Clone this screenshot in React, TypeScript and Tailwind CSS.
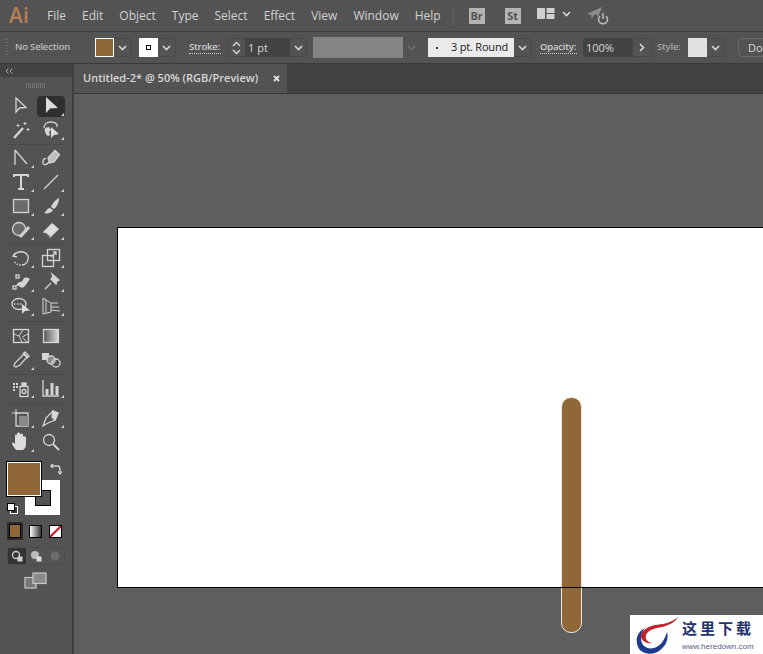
import type { ReactNode } from "react";

const menus = ["File", "Edit", "Object", "Type", "Select", "Effect", "View", "Window", "Help"];

const Chevron = ({ className = "text-[#d8d8d8]" }: { className?: string }) => (
  <svg width="9" height="6" viewBox="0 0 9 6" fill="none" stroke="currentColor" strokeWidth="1.6" className={className}>
    <path d="M1 1l3.5 3.5L8 1" />
  </svg>
);

const ChevronBox = ({ className = "w-[18px]" }: { className?: string }) => (
  <div className={`h-[19px] flex items-center justify-center rounded-r-sm border border-l-0 border-[#4a4a4a] ${className}`}>
    <Chevron />
  </div>
);

const Tool = ({ children, flag = false, active = false }: { children: ReactNode; flag?: boolean; active?: boolean }) => (
  <div className={`relative w-[28px] flex items-center justify-center rounded-sm text-[#d4d4d4] ${active ? "h-[21px] bg-[#2f2f2f]" : "h-[24px]"}`}>
    <svg width="20" height="20" viewBox="0 0 20 20" fill="none" stroke="currentColor" strokeWidth="1.3">
      {children}
    </svg>
    {flag && <div className={`absolute right-[1px] w-0 h-0 border-l-[3px] border-l-transparent border-b-[3px] border-b-[#d4d4d4] ${active ? "bottom-[1px]" : "bottom-[2px]"}`} />}
  </div>
);

const Row = ({ children }: { children: ReactNode }) => (
  <div className="h-[24px] flex items-center justify-center gap-[2px]">{children}</div>
);

const Sep = ({ h = "mt-[2px] mb-[1px]" }: { h?: string }) => <div className={`h-px mx-[8px] bg-[#494949] ${h}`} />;

const Tools = () => (
  <div className="flex flex-col">
    <Row>
      <Tool><path d="M5 2v14l3.500-4 6.500-.5z" /></Tool>
      <Tool active flag><path d="M5 1v16l4-4.500 8-.5z" fill="#dcdcdc" stroke="none" /></Tool>
    </Row>
    <Row>
      <Tool><path d="M3 18L12 8" strokeWidth="2.4" /><path d="M14 2v3M12.500 3.500h3M17 8v3M15.500 9.500h3M7 4v3M5.500 5.500h3" strokeWidth="1" /></Tool>
      <Tool flag><path d="M3 8c0-4 3-6 7-6s7 2 6 5" /><path d="M4 8c-1 3 1 7 3 8l2-1-1-3 2-2-2-3z" fill="#d4d4d4" stroke="none" /><path d="M10 7v11l3-3 5-1z" fill="#dcdcdc" stroke="none" /></Tool>
    </Row>
    <Sep />
    <Row>
      <Tool flag><path d="M4 2v15M4 2l12 14" /></Tool>
      <Tool><path d="M7 10L14 2.500 18.500 6.500 13 14 8.500 15z" fill="#bdbdbd" /><path d="M8 14C5 18 1 17 2 13c.5-2 2-3 3-2" /></Tool>
    </Row>
    <Row>
      <Tool flag><path d="M3 5V3h14v2M10 3v14M7 17h6" strokeWidth="2" /></Tool>
      <Tool flag><path d="M3 17L17 3" /></Tool>
    </Row>
    <Row>
      <Tool flag><rect x="2.500" y="3.500" width="15" height="13" fill="#6b6b6b" /></Tool>
      <Tool flag><path d="M18 2c-3 1-7 6-8 9l3 2c3-2 5-7 5-11z" fill="#d4d4d4" stroke="none" /><path d="M9 12c-3 0-3 3-6 5 3 1 8 0 9-3z" fill="#d4d4d4" stroke="none" /></Tool>
    </Row>
    <Row>
      <Tool flag><circle cx="8" cy="9" r="6.500" fill="#6b6b6b" /><path d="M9 17L18 7" strokeWidth="3" /></Tool>
      <Tool flag><path d="M2 12l9-9 7 6-9 9z" fill="#dcdcdc" stroke="none" /><path d="M4 13l5 4" stroke="#535353" /></Tool>
    </Row>
    <Sep />
    <Row>
      <Tool flag><path d="M4 5l-2 3 4 1M3 7c3-4 11-5 14 1 1 5-2 9-6 9" /><path d="M10 17c-3 0-5-1-7-4" strokeDasharray="1.500 1.500" /></Tool>
      <Tool flag><rect x="1.500" y="7.500" width="11" height="11" /><rect x="6.500" y="1.500" width="12" height="11" /><path d="M10 9l5-5M12 4h3v3" /></Tool>
    </Row>
    <Row>
      <Tool flag><path d="M6 14c2-6 4-1 6-5s3-3 6-2c-2 3-4 8-7 8s-2-4-5-1z" fill="#d4d4d4" /><rect x="2" y="14" width="3" height="3" /><rect x="5" y="3" width="3" height="3" /></Tool>
      <Tool flag><path d="M11 2l7 6-2 1-1 3-5-5 2-2zM4 17l6-6" fill="#d4d4d4" /></Tool>
    </Row>
    <Row>
      <Tool flag><ellipse cx="8" cy="8" rx="7" ry="5.500" /><path d="M3 8h9" strokeDasharray="1.500 1.500" /><path d="M11 8v10l3-3 5-.5z" fill="#dcdcdc" stroke="none" /></Tool>
      <Tool flag><path d="M2 2l8 5v9l-8 2zM10 7l7 0M10 11l8 0M10 14l9 1M5 4v13" strokeWidth="1" /></Tool>
    </Row>
    <Sep h="mt-[3px] mb-[2px]" />
    <Row>
      <Tool><rect x="2.500" y="3.500" width="15" height="13" /><path d="M3 8l5 2 3 6M8 10l4-6M11 11l6-3M12 12l4 4" strokeWidth="1" /></Tool>
      <Tool><rect x="2.500" y="3.500" width="15" height="13" fill="url(#toolGrad)" /><defs><linearGradient id="toolGrad"><stop stopColor="#555" /><stop offset="1" stopColor="#ddd" /></linearGradient></defs></Tool>
    </Row>
    <Row>
      <Tool flag><path d="M14 2l4 4-2 1-7 8-4 2-2-1 1-3 8-8z" /><path d="M12 3l5 5" strokeWidth="2" /></Tool>
      <Tool><rect x="1" y="3" width="7" height="7" fill="#d4d4d4" stroke="none" /><circle cx="10" cy="10" r="4" fill="#888" /><circle cx="15" cy="13" r="4" /></Tool>
    </Row>
    <Sep />
    <Row>
      <Tool flag><rect x="9" y="8.500" width="8" height="10" /><rect x="11" y="5" width="4" height="3" fill="#d4d4d4" /><circle cx="13" cy="13.500" r="2" /><path d="M2 6h2M5 6h2M2 9h2M5 9h2M2 12h2" strokeWidth="2" /></Tool>
      <Tool flag><path d="M2 2v16h16" /><path d="M6 17v-6M11 17V5M16 17V8" strokeWidth="3" /></Tool>
    </Row>
    <Sep h="mt-[3px] mb-[2px]" />
    <Row>
      <Tool flag><path d="M1 5h6M5 1v6" strokeWidth="1" /><path d="M5 5h12v13H5z" /><path d="M8 8h9v10H8z" fill="#888" stroke="none" /></Tool>
      <Tool flag><path d="M2 18l3-8 7-7 5 2-3 7-7 3z" /><path d="M12 3l5 2-3 7-3-3z" fill="#d4d4d4" /></Tool>
    </Row>
    <Row>
      <Tool flag><path d="M5 18c-2-3-4-5-4-7 1-1 2 0 3 1V4c0-2 2-2 2 0V2c0-2 3-2 3 0v1c0-2 3-2 3 0v2c0-1 3-1 3 1v6c0 3-1 5-3 6z" fill="#dcdcdc" stroke="none" /></Tool>
      <Tool><circle cx="8" cy="8" r="5.500" /><path d="M12 12l6 6" strokeWidth="2" /></Tool>
    </Row>
  </div>
);

const ColorBlock = () => (
  <div className="flex flex-col">
    <div className="relative h-[60px] mt-[8px]">
      {/* stroke swatch sits behind the fill swatch */}
      <div className="absolute left-[25px] top-[18px] w-[35px] h-[35px] bg-white flex items-center justify-center">
        <div className="w-[16px] h-[16px] bg-[#535353] border border-black" />
      </div>
      <div className="absolute left-[7px] top-[0px] w-[34px] h-[34px] bg-[#906739] border border-white outline outline-1 outline-black" />
      <svg className="absolute left-[50px] top-[1px] text-[#d4d4d4]" width="12" height="13" viewBox="0 0 12 13" fill="none" stroke="currentColor" strokeWidth="1.300">
        <path d="M1 3h7c2 0 2 2 2 6M0.500 3l2.500-2M0.500 3l2.500 2M10 11l-2-2.500M10 11l2-2.500" />
      </svg>
      <div className="absolute left-[7px] top-[41px] w-[8px] h-[8px] bg-white border border-black z-10" />
      <div className="absolute left-[10px] top-[44px] w-[8px] h-[8px] bg-[#333] border border-white" />
    </div>
    <div className="flex items-center pl-[7px] mb-[7px]">
      <div className="w-[16px] h-[18px] bg-[#2f2a25] p-[2px]"><div className="w-full h-full bg-[#906739] border border-black" /></div>
      <div className="ml-[6px] w-[13px] h-[13px] border border-black bg-gradient-to-r from-white to-[#3a3a3a]" />
      <div className="ml-[7px] w-[13px] h-[13px] border border-black bg-white overflow-hidden relative">
        <div className="absolute left-[-3px] top-[4px] w-[18px] h-[2px] bg-[#d0101c] -rotate-45" />
      </div>
    </div>
    <div className="mx-[7px] flex h-[18px] border border-[#4c4c4c] rounded-sm">
      <div className="w-[18px] bg-[#333] flex items-center justify-center">
        <svg width="12" height="12" viewBox="0 0 12 12" fill="none" stroke="#cfcfcf" strokeWidth="1.300"><circle cx="5" cy="5" r="3.500" /><rect x="6.500" y="6.500" width="5" height="5" fill="#cfcfcf" stroke="none" /></svg>
      </div>
      <div className="w-[20px] flex items-center justify-center">
        <svg width="12" height="12" viewBox="0 0 12 12" fill="#bcbcbc"><circle cx="5" cy="5" r="4" /><rect x="6.500" y="6.500" width="5" height="5" fill="#dcdcdc" /></svg>
      </div>
      <div className="flex-1 flex items-center justify-center">
        <svg width="10" height="10" viewBox="0 0 10 10" fill="#6c6c6c"><circle cx="5" cy="5" r="4.500" /></svg>
      </div>
    </div>
    <div className="flex justify-center mt-[7px]">
      <svg width="24" height="17" viewBox="0 0 24 17" fill="#777" stroke="#c8c8c8" strokeWidth="1.200">
        <rect x="1" y="5.500" width="11" height="10.500" />
        <rect x="9" y="1" width="13" height="10.500" fill="#8a8a8a" />
      </svg>
    </div>
  </div>
);

const OptionsBar = () => (
  <div className="h-[33px] shrink-0 flex items-center *:shrink-0 bg-[#535353] border-t border-[#3e3e3e] border-b border-b-[#3a3a3a] text-[#cfcfcf] text-[9.5px] whitespace-nowrap">
    <div className="ml-[5px] w-[3px] h-[18px] bg-[repeating-linear-gradient(#6a6a6a_0_1px,transparent_1px_3px)]" />
    <span className="ml-[7px] w-[56px] text-[#bdbdbd] font-semibold tracking-[-0.2px]">No Selection</span>
    <div className="ml-[24px] w-[19px] h-[19px] bg-[#906739] border border-white" />
    <ChevronBox />
    <div className="ml-[7px] w-[19px] h-[19px] bg-white flex items-center justify-center">
      <div className="w-[5px] h-[5px] border border-black" />
    </div>
    <ChevronBox />
    <span className="ml-[13px] w-[32px] border-b border-dotted border-[#cfcfcf] leading-[12px] font-semibold tracking-[-0.2px]">Stroke:</span>
    <div className="ml-[6px] w-[18px] h-[19px] flex items-center justify-center border border-r-0 border-[#4a4a4a] rounded-l-sm">
      <svg width="9" height="14" viewBox="0 0 9 14" fill="none" stroke="#d8d8d8" strokeWidth="1.300"><path d="M1 5l3.500-3.500L8 5M1 9l3.500 3.500L8 9" /></svg>
    </div>
    <div className="w-[45px] h-[19px] bg-[#434343] pl-[3px] text-[11px] leading-[19px] text-[#d8d8d8]">1 pt</div>
    <ChevronBox className="w-[17px]" />
    <div className="ml-[6px] w-[90px] h-[21px] bg-[#848484]" />
    <div className="w-[17px] flex justify-center"><Chevron className="text-[#6f6f6f]" /></div>
    <div className="ml-[8px] w-[86px] h-[19px] bg-[#eaeaea] flex items-center text-[#1c1c1c] text-[11px]">
      <span className="ml-[8px] w-[2px] h-[2px] bg-black rounded-full" />
      <span className="ml-[13px] tracking-[-0.2px]">3 pt. Round</span>
    </div>
    <ChevronBox />
    <span className="ml-[8px] w-[37px] border-b border-dotted border-[#cfcfcf] leading-[12px] font-semibold tracking-[-0.2px]">Opacity:</span>
    <div className="ml-[6px] w-[50px] h-[19px] bg-[#434343] pl-[3px] text-[11px] leading-[19px] text-[#d8d8d8] rounded-l-sm">100%</div>
    <div className="w-[19px] h-[19px] flex items-center justify-center border border-l-0 border-[#4a4a4a]">
      <svg width="6" height="9" viewBox="0 0 6 9" fill="none" stroke="#d8d8d8" strokeWidth="1.600"><path d="M1 1l3.500 3.500L1 8" /></svg>
    </div>
    <span className="ml-[5px] w-[26px] text-[#a8a8a8] font-semibold tracking-[-0.2px]">Style:</span>
    <div className="ml-[5px] w-[19px] h-[19px] bg-[#e2e2e2]" />
    <ChevronBox />
    <div className="ml-[13px] h-[19px] pl-[9px] pr-[12px] border border-[#6a6a6a] rounded-sm text-[11px] leading-[17px] text-[#d8d8d8]">Document Setup</div>
  </div>
);

const Watermark = () => (
  <div className="absolute right-0 bottom-0 w-[133px] h-[39px] bg-white flex overflow-hidden">
    <svg width="50" height="39" viewBox="0 0 50 39" className="shrink-0 -mr-[6px]">
      <path d="M15 13C7 17 5 25 8 32c3 7 14 9 21 4 7-5 10-12 8-19-2 7-6 14-13 16-7 2-13-3-13-9 0-4 1-8 4-11z" fill="#1d3a8f" />
      <path d="M48 2C40 9 32 9 25 10 17 12 11 16 11 21c0 5 6 8 11 7-5-1-7-4-6-8 2-5 9-7 16-8 8-2 13-5 16-10z" fill="#c0232e" />
    </svg>
    <div className="flex flex-col pl-[8px]">
      <span className="text-[15px] leading-[18px] mt-[4px] font-bold tracking-[3px] text-[#22306e] whitespace-nowrap font-['Noto_Sans_CJK_SC',sans-serif]">这里下载</span>
      <span className="text-[8px] leading-[9px] mt-[5px] text-[#55608a] whitespace-nowrap font-['Liberation_Sans',sans-serif]">www.heredown.com</span>
    </div>
  </div>
);

export default function App() {
  return (
    <div className="w-[763px] h-[654px] relative overflow-hidden flex flex-col bg-[#5e5e5e] font-['Open_Sans',sans-serif]">
      {/* menu bar */}
      <div className="h-[31px] shrink-0 flex items-center bg-[#535353] text-[12px] text-[#d2d2d2] whitespace-nowrap">
        <span className="ml-[9px] w-[19px] text-[21px] font-semibold leading-none text-[#b57f58]">Ai</span>
        <div className="ml-[19px] flex gap-[16px]">
          {menus.map((m) => (
            <span key={m}>{m}</span>
          ))}
        </div>
        <div className="ml-[12px] w-px h-[20px] bg-[#626262]" />
        <div className="ml-[15px] w-[16px] h-[16px] bg-[#b4b4b4] text-[#535353] text-[11px] font-bold leading-[16px] text-center">Br</div>
        <div className="ml-[20px] w-[16px] h-[16px] bg-[#b4b4b4] text-[#535353] text-[11px] font-bold leading-[16px] text-center">St</div>
        <svg className="ml-[16px] mb-[3px]" width="18" height="12" viewBox="0 0 18 12" fill="#d0d0d0">
          <rect width="8" height="11" />
          <rect x="9.500" width="8" height="5" />
          <rect x="9.500" y="6" width="8" height="5" />
        </svg>
        <div className="ml-[7px] mb-[3px] flex"><Chevron /></div>
        <svg className="ml-[16px]" width="22" height="22" viewBox="0 0 22 22" fill="none">
          <path d="M0 9l15-7-4 10-2-3-3 2-1 3-1-4z" fill="#8c8c8c" />
          <path d="M13 11a4.500 4.500 0 1 0 6 0M16 8v6" stroke="#bdbdbd" strokeWidth="1.500" />
        </svg>
      </div>

      <OptionsBar />

      <div className="flex-1 flex min-h-0">
        {/* tools panel */}
        <div className="w-[74px] shrink-0 bg-[#535353] border-r-2 border-[#3f3f3f] flex flex-col">
          <div className="h-[13px] bg-[#424242] flex items-center pl-[5px]">
            <svg width="8" height="6" viewBox="0 0 8 6" fill="none" stroke="#a8a8a8"><path d="M3.500 0.500L1 3l2.500 2.500M7.500 0.500L5 3l2.500 2.500" /></svg>
          </div>
          <div className="h-[17px] flex items-center justify-center">
            <div className="w-[20px] h-[5px] bg-[repeating-linear-gradient(90deg,#777_0_1px,transparent_1px_2px)]" />
          </div>
          <Tools />
          <ColorBlock />
        </div>

        <div className="flex-1 flex flex-col min-w-0">
          {/* tab strip */}
          <div className="h-[30px] shrink-0 bg-[#424242] border-b border-[#383838] flex">
            <div className="w-[213px] bg-[#535353] flex items-center text-[11px] font-semibold text-[#d8d8d8] whitespace-nowrap">
              <span className="ml-[9px]">Untitled-2* @ 50% (RGB/Preview)</span>
              <svg className="ml-[15px]" width="7" height="7" viewBox="0 0 7 7" stroke="#e4e4e4" strokeWidth="1.800"><path d="M1 1l5 5M6 1L1 6" /></svg>
            </div>
          </div>
          {/* canvas */}
          <div className="relative flex-1 bg-[#5e5e5e]">
            <div className="absolute left-[43px] top-[133px] w-[700px] h-[361px] bg-white border border-black" />
            <div className="absolute left-[487px] top-[303px] w-[21px] h-[236px] bg-[#906739] rounded-[10px] border border-[#f1e6d8]" />
            <div className="absolute left-[43px] top-[493px] w-[700px] h-px bg-black" />
          </div>
        </div>
      </div>

      <Watermark />
    </div>
  );
}
